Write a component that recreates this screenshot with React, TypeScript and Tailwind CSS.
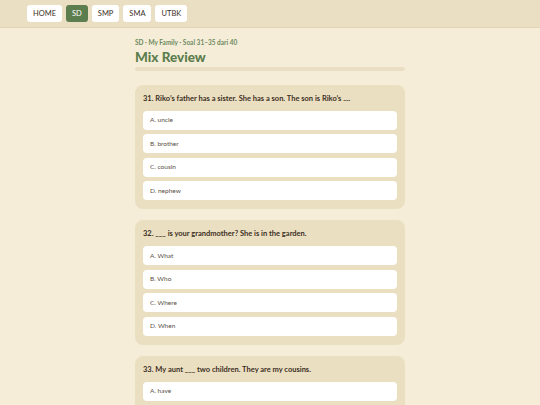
const tabs = ["HOME", "SD", "SMP", "SMA", "UTBK"]

const questions = [
  {
    no: 31,
    text: "Riko’s father has a sister. She has a son. The son is Riko’s ....",
    options: ["A. uncle", "B. brother", "C. cousin", "D. nephew"],
  },
  {
    no: 32,
    text: "___ is your grandmother? She is in the garden.",
    options: ["A. What", "B. Who", "C. Where", "D. When"],
  },
  {
    no: 33,
    text: "My aunt ___ two children. They are my cousins.",
    options: ["A. have", "B. has", "C. having", "D. to have"],
  },
]

export default function App() {
  return (
    <div
      className="min-h-screen bg-[#f6edd8] text-[#3b2f1e]"
      style={{ fontFamily: 'Lato, "Noto Sans", sans-serif' }}
    >
      <header className="h-[28px] bg-[#ebdfc3] border-b border-[#e2d5b6] flex items-center gap-[4px] px-[27px]">
        {tabs.map((t) => (
          <button
            key={t}
            className={
              t === "SD"
                ? "h-[17px] px-[6px] rounded-[3px] bg-[#5c7d4d] text-white text-[7.5px] leading-none"
                : "h-[17px] px-[6px] rounded-[3px] bg-white text-[#3b2f1e] text-[7.5px] leading-none"
            }
          >
            {t}
          </button>
        ))}
      </header>

      <main className="w-[270px] mx-auto pt-[10px]">
        <p className="text-[6.5px] font-bold text-[#6e8a5f]">SD · My Family · Soal 31–35 dari 40</p>
        <h1 className="text-[13.5px] font-black text-[#5c7d4d] leading-[16px] mt-[1px]">Mix Review</h1>
        <div className="h-[4px] rounded-full bg-[#eadfc4] mt-[2px]" />

        <div className="flex flex-col gap-[11px] mt-[14px]">
          {questions.map((q) => (
            <section key={q.no} className="bg-[#ebdfc2] rounded-[8px] px-[8px] pt-[9px] pb-[9px]">
              <p className="text-[7.5px] font-bold leading-[10px]">
                {q.no}. {q.text}
              </p>
              <div className="flex flex-col gap-[4.5px] mt-[7px]">
                {q.options.map((o) => (
                  <div
                    key={o}
                    className="h-[19px] bg-white rounded-[4px] px-[7px] flex items-center text-[6.5px] text-[#5a5046]"
                  >
                    {o}
                  </div>
                ))}
              </div>
            </section>
          ))}
        </div>
      </main>
    </div>
  )
}
